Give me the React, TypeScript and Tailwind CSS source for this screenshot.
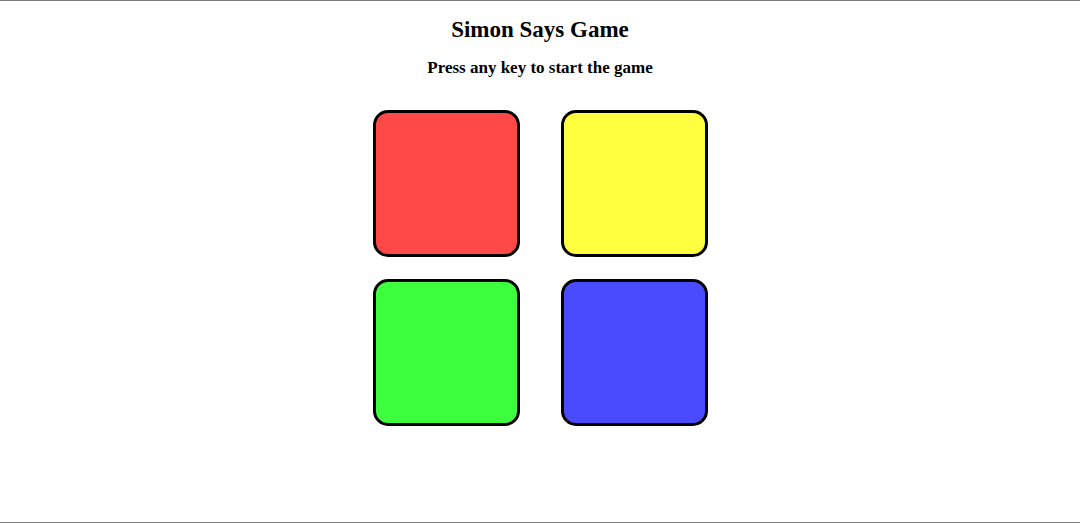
const pads = [
  { id: 'red', color: 'bg-[#ff4848]' },
  { id: 'yellow', color: 'bg-[#ffff3f]' },
  { id: 'green', color: 'bg-[#3dff3d]' },
  { id: 'blue', color: 'bg-[#4a4aff]' },
];

export default function App() {
  return (
    <div className="h-[523px] border-y border-[#7a7a7a] bg-white text-black font-['Liberation_Serif',serif]">
      <h2 className="mt-[15px] text-center text-[23px] font-bold leading-[28px]">Simon Says Game</h2>
      <h3 className="mt-[13px] text-center text-[17px] font-bold leading-[21px]">Press any key to start the game</h3>
      <div className="mt-[32px] flex justify-center">
        <div className="grid grid-cols-2 gap-x-[41px] gap-y-[22px]">
          {pads.map((p) => (
            <div
              key={p.id}
              className={`h-[147px] w-[147px] rounded-[15px] border-[3px] border-black ${p.color}`}
            />
          ))}
        </div>
      </div>
    </div>
  );
}
